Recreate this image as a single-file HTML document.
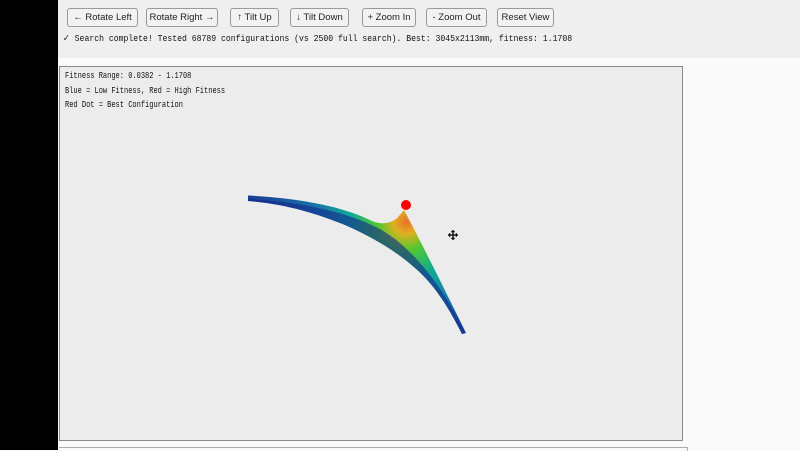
<!DOCTYPE html>
<html><head><meta charset="utf-8">
<style>
body{margin:0;width:800px;height:450px;overflow:hidden;background:#fafafa;font-family:"Liberation Sans",sans-serif;position:relative}
#black{position:absolute;left:0;top:0;width:58px;height:450px;background:#000}
#top{position:absolute;left:58px;top:0;width:742px;height:58px;background:#efefef}
.btn{position:absolute;top:8px;height:19px;border:1px solid #9a9a9a;border-radius:3px;background:#f2f2f2;font-size:9.5px;line-height:18px;text-align:center;color:#222;box-sizing:border-box;white-space:nowrap;overflow:hidden}
.mono{font-family:"Liberation Mono",monospace;color:#111}
#status{position:absolute;left:63px;top:33px;font-size:9.6px;white-space:nowrap;transform:scaleX(0.847);transform-origin:0 0}
#canvas{position:absolute;left:59px;top:66px;width:624px;height:375px;box-sizing:border-box;border:1px solid #8a8a8a;background:#ececec}
#legend{position:absolute;left:65px;top:69px;font-size:9px;line-height:14.5px;white-space:nowrap;transform:scaleX(0.78);transform-origin:0 0}
#bot{position:absolute;left:59px;top:447px;width:628px;height:3px;border-top:1px solid #aaa;border-right:1px solid #aaa}
</style></head><body>
<div id="black"></div>
<div id="top"></div>
<div class="btn" style="left:67px;width:71px">← Rotate Left</div>
<div class="btn" style="left:146px;width:72px">Rotate Right →</div>
<div class="btn" style="left:230px;width:49px">↑ Tilt Up</div>
<div class="btn" style="left:290px;width:59px">↓ Tilt Down</div>
<div class="btn" style="left:362px;width:54px">+ Zoom In</div>
<div class="btn" style="left:426px;width:61px">- Zoom Out</div>
<div class="btn" style="left:497px;width:57px">Reset View</div>
<div id="status" class="mono">✓ Search complete! Tested 68789 configurations (vs 2500 full search). Best: 3045x2113mm, fitness: 1.1708</div>
<div id="canvas"></div>
<div id="legend" class="mono">Fitness Range: 0.0382 - 1.1708<br>Blue = Low Fitness, Red = High Fitness<br>Red Dot = Best Configuration</div>
<svg style="position:absolute;left:0;top:0" width="800" height="450">
<defs>
<radialGradient id="g" gradientUnits="userSpaceOnUse" cx="406" cy="222" r="200">
<stop offset="0" stop-color="#e8702a"/>
<stop offset="0.06" stop-color="#e0b020"/>
<stop offset="0.14" stop-color="#50c830"/>
<stop offset="0.28" stop-color="#10a898"/>
<stop offset="0.45" stop-color="#1878a8"/>
<stop offset="0.7" stop-color="#184a98"/>
<stop offset="1" stop-color="#142a88"/>
</radialGradient>
</defs>
<path d="M248,195.5 C300,198 345,207 372,221 C384,226 394,222 399,216 L404,210 C420,240 445,290 466,333 L462,334 C450,310 435,285 415,268 C395,250 370,236 345,225 C315,213 285,204 248,201 Z" fill="url(#g)"/>
<path d="M462,334 C450,310 435,285 415,268 C395,250 370,236 345,225 C315,213 285,204 248,201 L248,199 C300,202 345,211 380,229 C410,246 440,282 466,333 Z" fill="#14248a" opacity="0.6"/>
<circle cx="406" cy="205" r="5" fill="#ff0000"/>
<g transform="translate(453,235)" stroke="#111" stroke-width="1.4" fill="#111">
<line x1="-4" y1="0" x2="4" y2="0"/><line x1="0" y1="-4" x2="0" y2="4"/>
<path d="M-5,0 l2,-2 v4z M5,0 l-2,-2 v4z M0,-5 l-2,2 h4z M0,5 l-2,-2 h4z" stroke-width="0.5"/>
</g>
</svg>
<div id="bot"></div>
</body></html>
